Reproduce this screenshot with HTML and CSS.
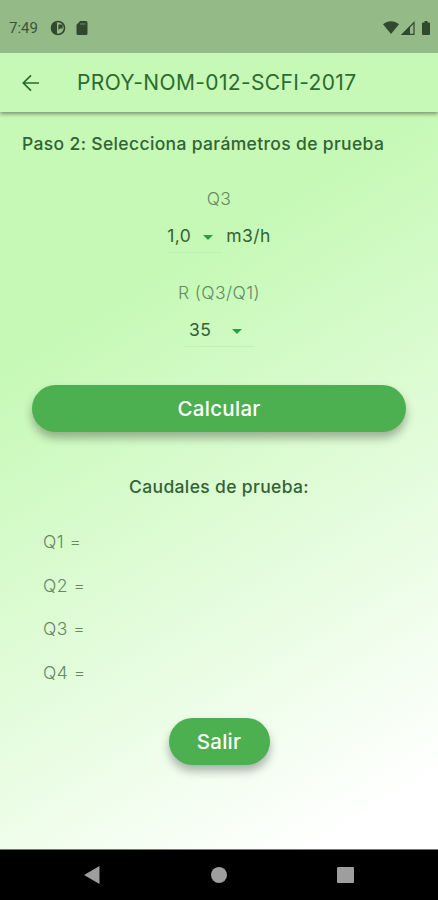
FILE: index.html
```html
<!DOCTYPE html>
<html lang="es">
<head>
    <meta charset="UTF-8">
    <meta name="viewport" content="width=device-width, initial-scale=1.0">
    <title>PROY-NOM-012-SCFI-2017</title>
    <link rel="stylesheet" href="styles.css">
</head>
<body>
    <div class="status-bar">
        <span class="time">7:49</span>
        <svg class="icon-app" width="16" height="16" viewBox="0 0 16 16">
            <circle cx="8" cy="8" r="6.5" fill="none" stroke="#2f4a2c" stroke-width="1.6"/>
            <path d="M3.4 2.6H7v11.8A7 7 0 0 1 3.4 2.6zM8.4 4.4h4.2v4.2H10L8.4 10z" fill="#2f4a2c"/>
        </svg>
        <svg class="icon-sd" width="12" height="14" viewBox="0 0 12 14">
            <path d="M4.2 0H10a1.5 1.5 0 0 1 1.5 1.5v11A1.5 1.5 0 0 1 10 14H2a1.5 1.5 0 0 1-1.5-1.5V3.8z" fill="#2f4a2c"/>
            <path d="M4 3h5.5" stroke="#6f9066" stroke-width="1"/>
        </svg>
        <div class="status-right">
            <svg width="16" height="13" viewBox="0 0 16 13">
                <path d="M0 3.2C4.6-.9 11.4-.9 16 3.2L8 13z" fill="#2f4a2c"/>
            </svg>
            <svg width="14" height="14" viewBox="0 0 14 14">
                <path d="M1.5 13.3L13 1.5v11.8z" fill="none" stroke="#2f4a2c" stroke-width="1.2"/>
                <path d="M0 14L9 5v9z" fill="#2f4a2c"/>
            </svg>
            <svg class="icon-battery" width="8" height="14" viewBox="0 0 8 14">
                <path d="M2.5 0h3v1.4H7a1 1 0 0 1 1 1V13a1 1 0 0 1-1 1H1a1 1 0 0 1-1-1V2.4a1 1 0 0 1 1-1h1.5z" fill="#2f4a2c"/>
            </svg>
        </div>
    </div>
    <header class="app-bar">
        <svg class="back" width="18" height="18" viewBox="0 0 18 18">
            <path d="M17 9H1.5M9 1.3L1.3 9L9 16.7" fill="none" stroke="#2c6a2c" stroke-width="1.7"/>
        </svg>
        <h1 class="title">PROY-NOM-012-SCFI-2017</h1>
    </header>
    <main class="content">
        <h2 class="step">Paso 2: Selecciona parámetros de prueba</h2>
        <div class="label label-q3">Q3</div>
        <div class="field">
            <div class="select select-q3">
                <span>1,0</span>
                <span class="arrow"></span>
            </div>
            <span class="unit">m3/h</span>
        </div>
        <div class="label label-r">R (Q3/Q1)</div>
        <div class="field">
            <div class="select select-r">
                <span>35</span>
                <span class="arrow"></span>
            </div>
        </div>
        <button class="btn btn-calc">Calcular</button>
        <h3 class="subtitle">Caudales de prueba:</h3>
        <ul class="results">
            <li>Q1 =</li>
            <li>Q2 =</li>
            <li>Q3 =</li>
            <li>Q4 =</li>
        </ul>
        <button class="btn btn-exit">Salir</button>
    </main>
    <nav class="nav-bar">
        <svg width="16" height="18" viewBox="0 0 16 18"><path d="M0 9L15.5 0v18z" fill="#9e9e9e"/></svg>
        <svg width="16" height="16" viewBox="0 0 16 16"><circle cx="8" cy="8" r="8" fill="#9e9e9e"/></svg>
        <svg width="17" height="16" viewBox="0 0 17 16"><rect width="17" height="16" rx="1" fill="#9e9e9e"/></svg>
    </nav>
</body>
</html>
```
FILE: styles.css
```css
*,
*::before,
*::after{
    box-sizing: border-box;
}
body {
    margin: 0;
    height: 900px;
    display: flex;
    flex-direction: column;
    font-family: Inter, Roboto, sans-serif;
    color: #336333;
    overflow: hidden;
}
h1, h2, h3, ul {
    margin: 0;
    padding: 0;
    font-weight: 500;
}
.status-bar {
    height: 53px;
    flex: none;
    display: flex;
    align-items: center;
    padding: 2px 8px 0 9px;
    background: #94ba88;
    z-index: 2;
}
.time {
    font-family: Roboto, sans-serif;
    font-size: 15px;
    color: #3a5637;
    width: 41px;
}
.icon-sd {
    margin-left: 10px;
}
.status-right {
    margin-left: auto;
    display: flex;
    align-items: center;
    gap: 2px;
}
.icon-battery {
    margin-left: 5px;
}
.app-bar {
    height: 59px;
    flex: none;
    display: flex;
    align-items: center;
    padding-left: 22px;
    background: #c5f9b5;
    box-shadow: 0 2px 4px rgba(0, 0, 0, .4);
    z-index: 1;
}
.title {
    margin-left: 37px;
    font-size: 21px;
    font-weight: 400;
    line-height: 26px;
    letter-spacing: .36px;
    color: #2f6a30;
}
.content {
    flex: 1;
    display: flex;
    flex-direction: column;
    align-items: center;
    background: linear-gradient(149deg, #c5f9b5 25%, #ffffff 93%);
}
.step {
    align-self: flex-start;
    margin: 22px 0 0 22px;
    font-size: 17.5px;
    line-height: 20px;
    letter-spacing: .35px;
}
.label {
    font-size: 17.5px;
    font-weight: 300;
    line-height: 20px;
    letter-spacing: .4px;
    color: #668b61;
}
.label-q3 {
    margin-top: 35px;
}
.label-r {
    margin-top: 30px;
}
.field {
    display: flex;
    height: 33px;
    margin-top: 11px;
    font-size: 17.5px;
    line-height: 32px;
    letter-spacing: .4px;
}
.select {
    display: flex;
    align-items: center;
    justify-content: space-between;
    border-bottom: 1px solid #bff1b4;
}
.select-q3 {
    width: 55px;
    padding-right: 9px;
}
.select-r {
    width: 70px;
    padding: 0 12px 0 5px;
}
.arrow {
    margin-top: 2px;
    border: 5px solid transparent;
    border-top-color: #2a9d48;
    border-bottom: 0;
}
.unit {
    margin-left: 4px;
}
.btn {
    border: 0;
    height: 47px;
    border-radius: 24px;
    background: #4caf50;
    color: #ffffff;
    font-family: inherit;
    font-size: 20.5px;
    font-weight: 500;
    letter-spacing: .3px;
    box-shadow: 0 6px 10px rgba(0, 0, 0, .3);
}
.btn-calc {
    width: 374px;
    margin-top: 38px;
}
.subtitle {
    margin-top: 45px;
    font-size: 17.5px;
    line-height: 20px;
    letter-spacing: .35px;
}
.results {
    align-self: stretch;
    margin: 33px 0 0 43px;
    list-style: none;
}
.results li {
    height: 43.6px;
    font-size: 17.5px;
    font-weight: 300;
    line-height: 24px;
    letter-spacing: .5px;
    color: #668762;
}
.btn-exit {
    width: 101px;
    margin-top: 14px;
}
.nav-bar {
    height: 51px;
    flex: none;
    display: flex;
    align-items: center;
    justify-content: space-between;
    padding: 0 84px;
    background: #000000;
    border-top: 1px solid #777777;
}
```
